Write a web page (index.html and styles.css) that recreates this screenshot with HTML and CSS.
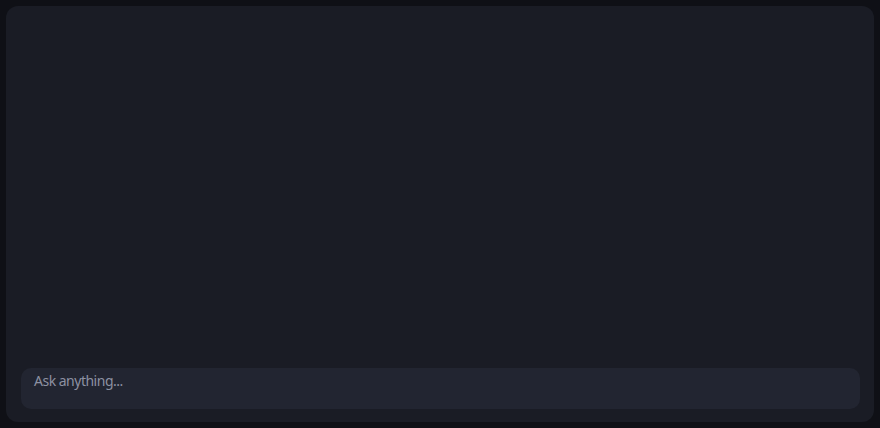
FILE: index.html
```html
<!DOCTYPE html>
<html>
<head>
<meta charset="utf-8">
<link rel="stylesheet" href="styles.css">
</head>
<body>
<div class="card">
  <div class="messages"></div>
  <div class="composer">
    <textarea class="input" placeholder="Ask anything..." rows="1"></textarea>
  </div>
</div>
</body>
</html>
```
FILE: styles.css
```css
html, body {
  margin: 0;
  height: 100%;
}
body {
  background: #0f1016;
  padding: 6px;
  box-sizing: border-box;
  font-family: "Noto Sans", sans-serif;
}
.card {
  height: 100%;
  box-sizing: border-box;
  background: #1a1c25;
  border-radius: 12px;
  display: flex;
  flex-direction: column;
  padding: 0 14px 13px 15px;
}
.messages {
  flex: 1;
}
.composer {
  height: 41px;
  background: #222531;
  border-radius: 10px;
  display: flex;
}
.input {
  flex: 1;
  background: transparent;
  border: none;
  outline: none;
  resize: none;
  font-family: "Noto Sans", sans-serif;
  font-size: 14px;
  letter-spacing: -0.5px;
  line-height: 20px;
  color: #c9ccd6;
  padding: 3px 13px;
  margin: 0;
}
.input::placeholder {
  color: #8d91a2;
  opacity: 1;
}
```
